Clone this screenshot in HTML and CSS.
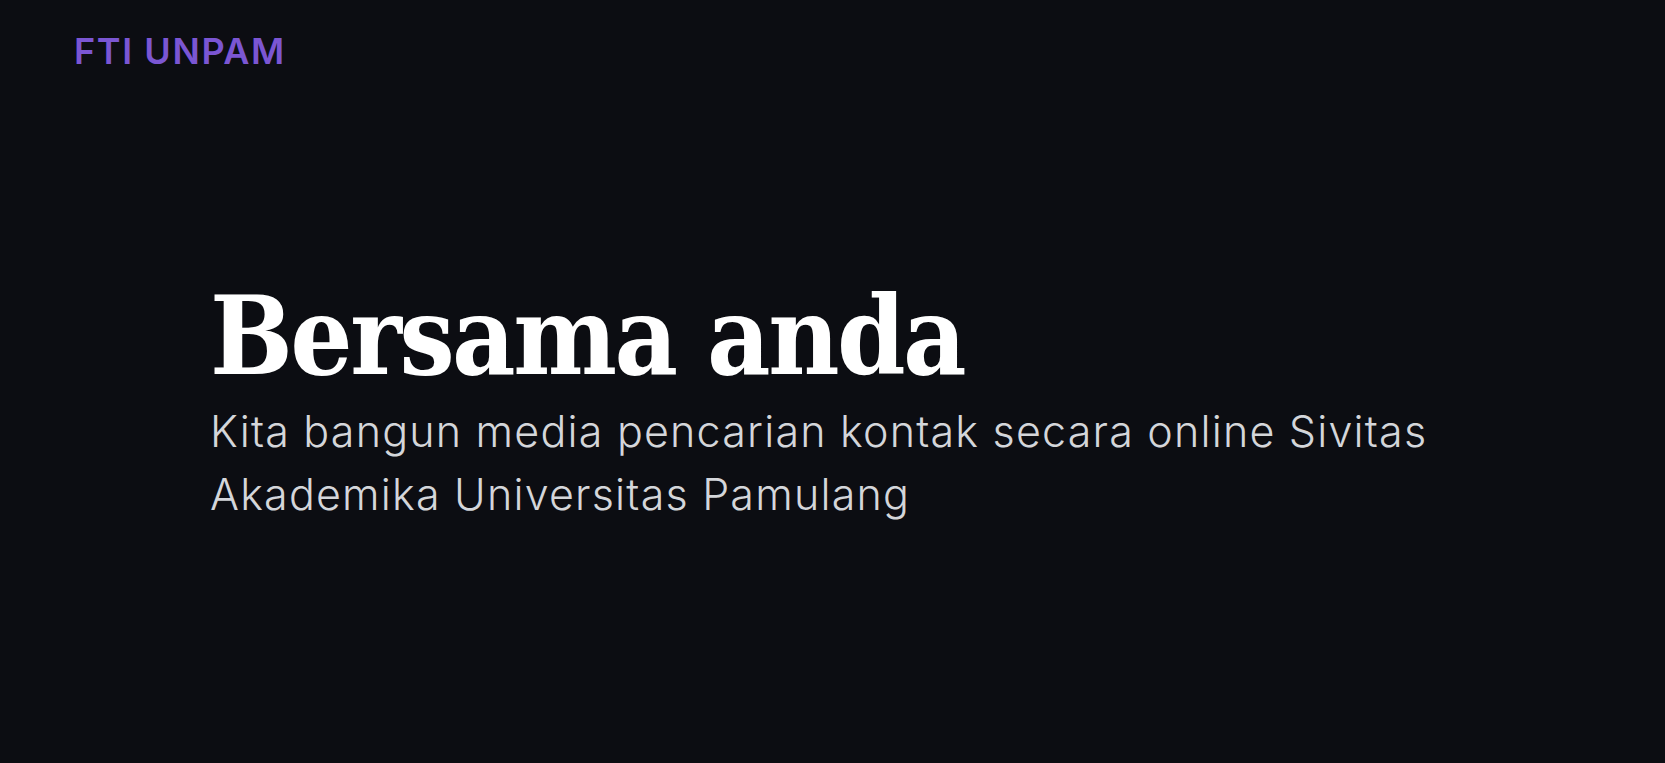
FILE: index.html
```html
<!DOCTYPE html>
<html lang="id">
<head>
<meta charset="utf-8">
<title>FTI UNPAM</title>
<link rel="stylesheet" href="styles.css">
</head>
<body>
<header class="topbar">
  <a class="brand" href="#">FTI UNPAM</a>
</header>
<main class="hero">
  <h1 class="hero-title">Bersama anda</h1>
  <p class="hero-text">Kita bangun media pencarian kontak secara online Sivitas Akademika Universitas Pamulang</p>
</main>
</body>
</html>
```
FILE: styles.css
```css
html, body {
  margin: 0;
  padding: 0;
}
body {
  background: #0c0d12;
  min-height: 100vh;
  font-family: "Inter", "Noto Sans", sans-serif;
  color: #d4d6da;
}
.topbar {
  padding: 29px 74px 0;
  display: flex;
  align-items: center;
}
.brand {
  font-family: "Inter", sans-serif;
  font-weight: 600;
  font-size: 36px;
  line-height: 44px;
  color: #7b56d3;
  text-decoration: none;
  letter-spacing: 1.6px;
}
.hero {
  padding: 203px 210px 0;
  display: flex;
  flex-direction: column;
}
.hero-title {
  margin: 0;
  font-family: "DejaVu Serif", "Liberation Serif", serif;
  font-stretch: condensed;
  font-weight: 700;
  font-size: 109px;
  line-height: 120px;
  color: #ffffff;
  letter-spacing: -2.5px;
}
.hero-text {
  margin: 4px 0 0;
  max-width: 1260px;
  font-family: "Inter", sans-serif;
  font-weight: 300;
  font-size: 43px;
  line-height: 63px;
  color: #d4d6da;
  letter-spacing: 1.2px;
}
```
